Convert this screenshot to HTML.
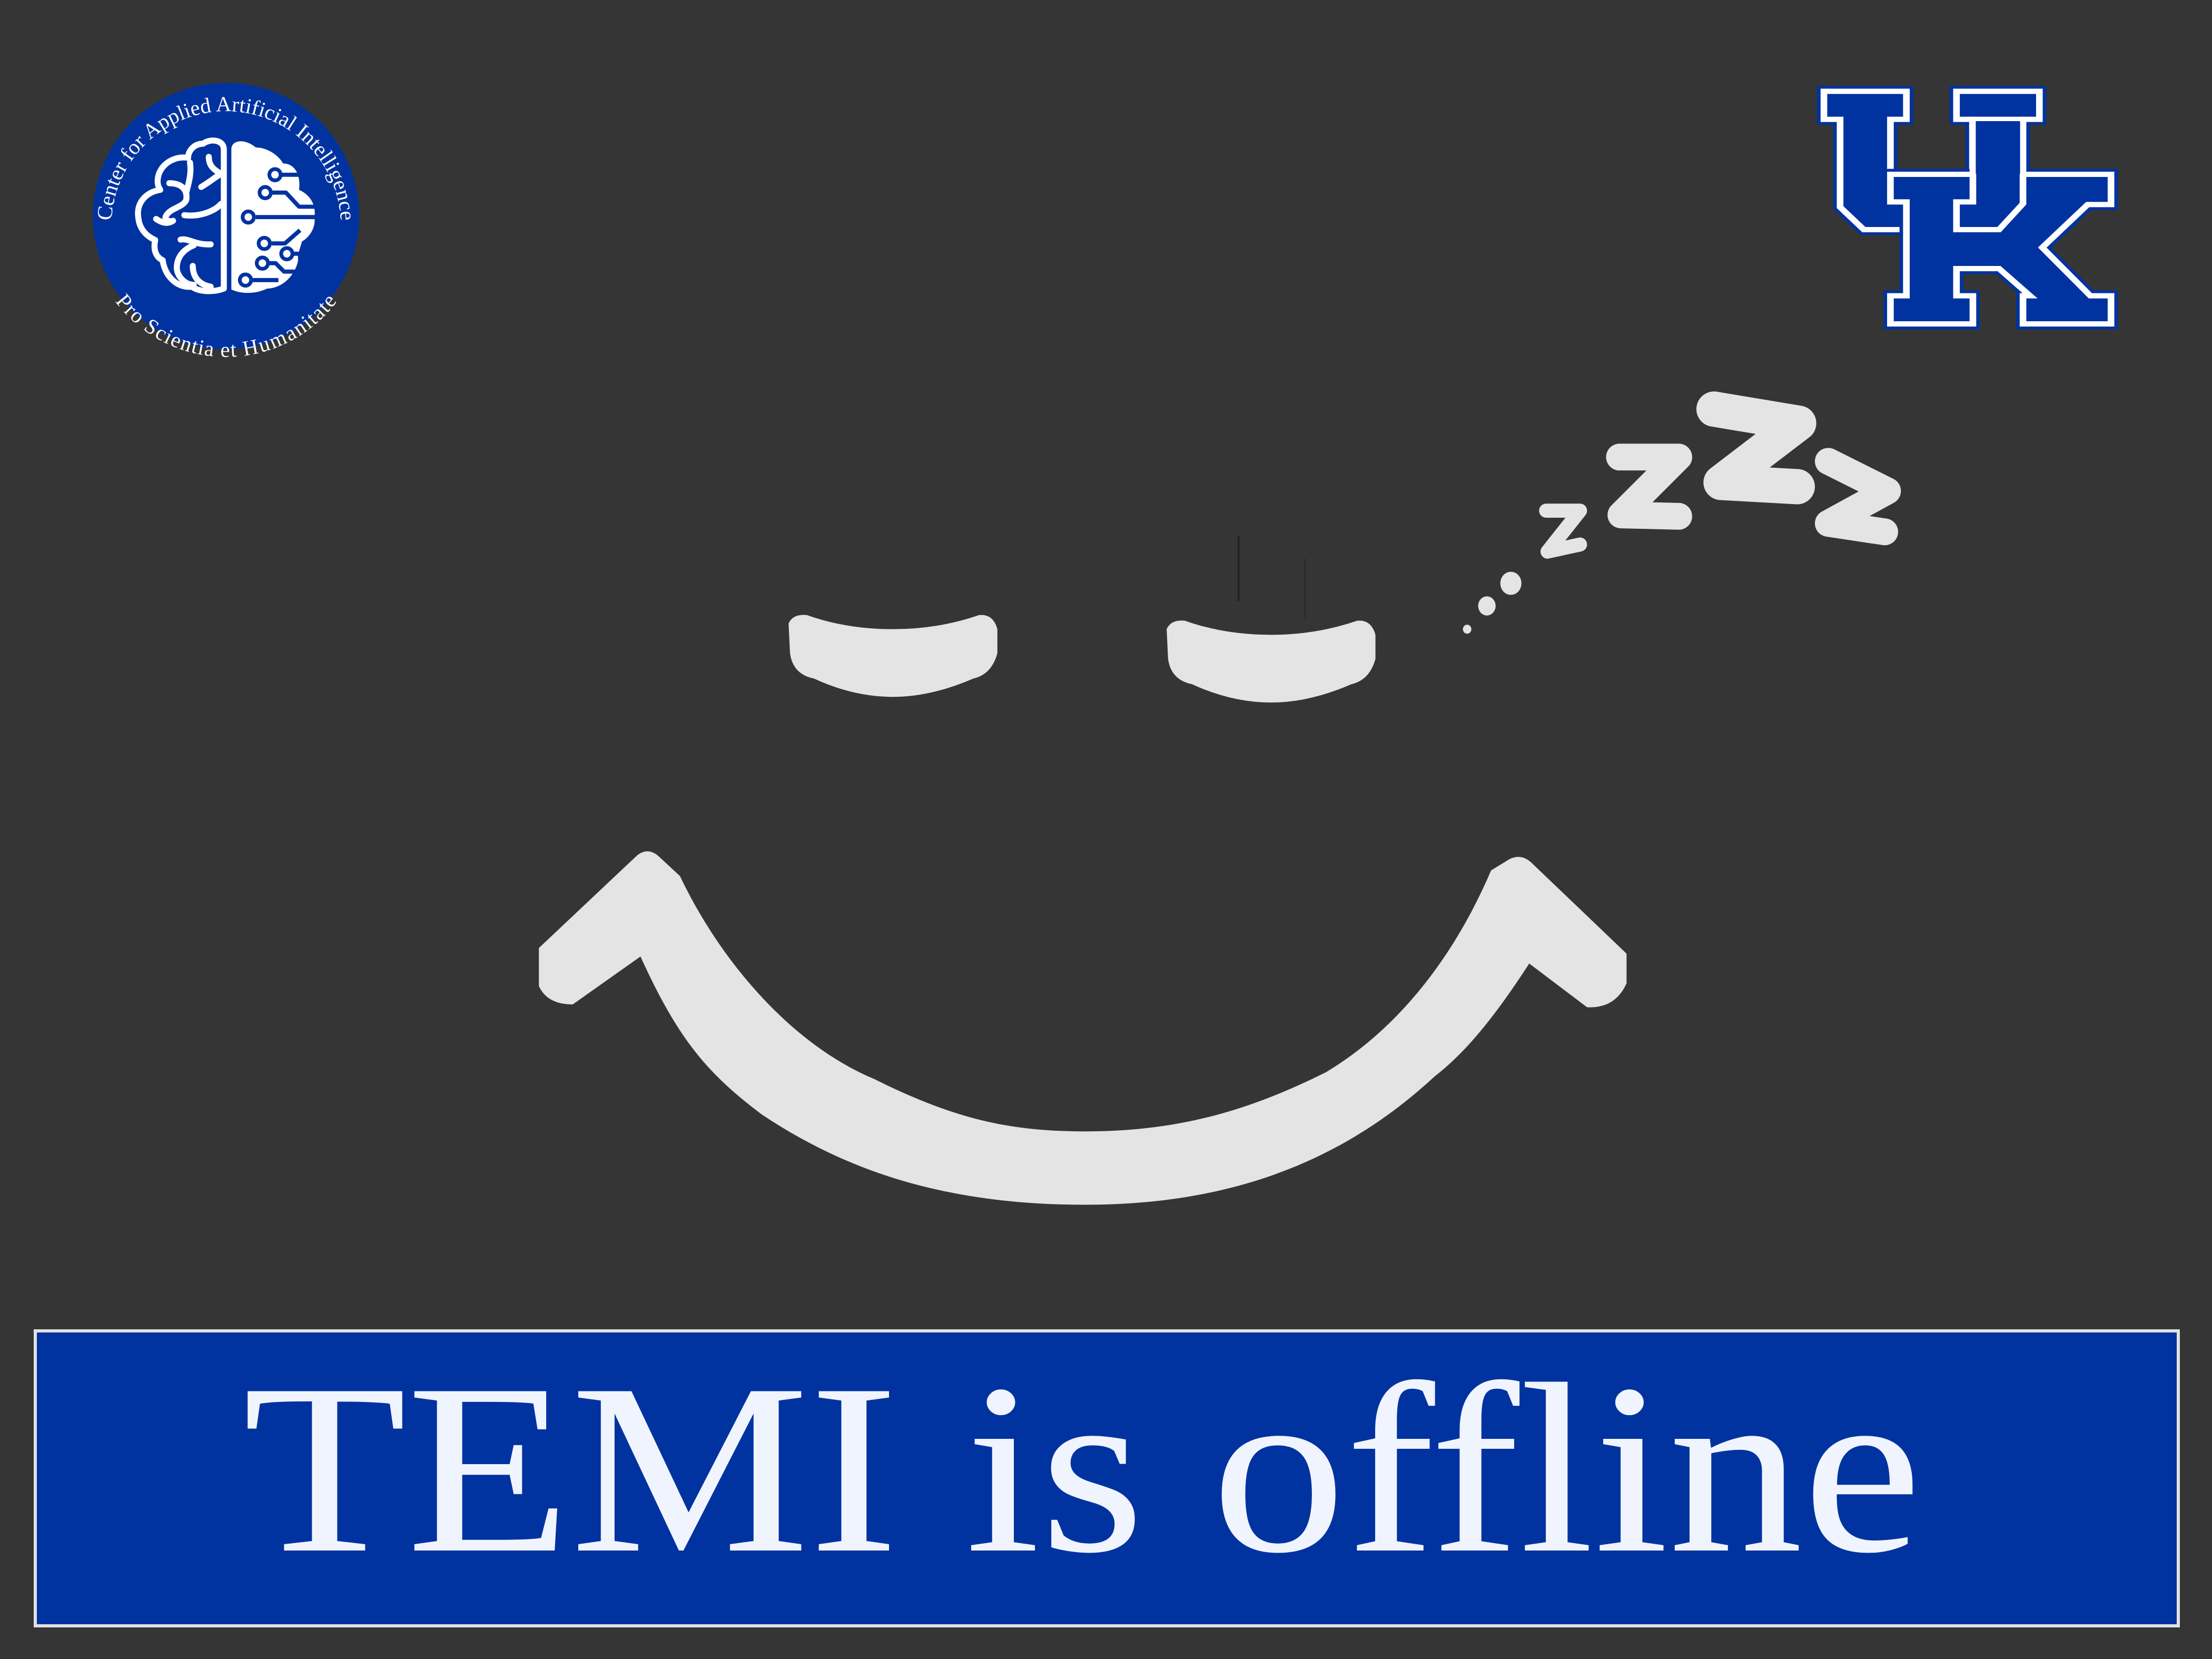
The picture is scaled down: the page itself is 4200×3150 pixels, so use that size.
<!DOCTYPE html>
<html><head><meta charset="utf-8"><style>
html,body{margin:0;padding:0;background:#353535;}
body{width:4200px;height:3150px;overflow:hidden;}
svg{display:block;}
</style></head><body>
<svg width="4200" height="3150" viewBox="0 0 4200 3150" xmlns="http://www.w3.org/2000/svg">
<rect width="4200" height="3150" fill="#353535"/>

<g transform="scale(2.67857)">
  <path fill="#e4e4e4" d="M559,442 Q562,435 572,436 Q600,446 633,446 Q665,446 694,436 Q704,435 707,446 L707,463 Q703,478 690,481 Q660,494 633,494 Q605,494 577,481 Q562,478 560,463 Z"/>
  <path fill="#e4e4e4" transform="translate(268,4)" d="M559,442 Q562,435 572,436 Q600,446 633,446 Q665,446 694,436 Q704,435 707,446 L707,463 Q703,478 690,481 Q660,494 633,494 Q605,494 577,481 Q562,478 560,463 Z"/>
  <line x1="878" y1="380" x2="878" y2="426" stroke="#1e1e1e" stroke-width="1.2"/>
  <line x1="925" y1="396" x2="925" y2="438" stroke="#2a2a2a" stroke-width="1"/>
  <path fill="#e4e4e4" d="M382,672 L452,606 Q460,600 468,608 L482,621 C510,680 560,740 620,765 C680,795 720,802 769,802 C830,802 880,790 940,760 C990,730 1030,680 1057,617 L1070,609 Q1078,605 1085,611 L1153,676 L1153,697 Q1145,715 1125,714 L1084,683 C1060,720 1040,745 1017,763 C950,825 870,854 769,854 C670,854 600,830 540,790 C500,760 480,735 454,678 L406,712 Q388,712 382,699 Z"/>
  <ellipse cx="1040" cy="446" rx="3" ry="3.2" fill="#e4e4e4"/>
  <ellipse cx="1054" cy="429.5" rx="6.2" ry="6.8" fill="#e4e4e4"/>
  <ellipse cx="1071" cy="413.5" rx="7.5" ry="8.2" fill="#e4e4e4"/>
  <g fill="none" stroke="#e4e4e4" stroke-linecap="round" stroke-linejoin="round">
    <path stroke-width="10" d="M1096,362 L1120,362 L1097,391 L1120,386"/>
    <path stroke-width="19" d="M1148,324 L1190,324 L1149,365 L1190,366"/>
    <path stroke-width="25" d="M1215,290 L1275,300 L1220,342 L1274,345"/>
    <path stroke-width="19" d="M1296,327 L1338,348 L1296,371 L1336,377"/>
  </g>
</g>

<svg x="150" y="130" width="560" height="560" viewBox="0 0 1568 1568">
  <circle cx="782" cy="785" r="708" fill="#0033a0"/>
  <defs>
    <path id="topArc" d="M 200,1020 A 610 610 0 1 1 1364,1020"/>
    <path id="botArc" d="M 130,860 A 655 655 0 0 0 1434,860"/>
  </defs>
  <text font-family="Liberation Serif, serif" font-size="114" fill="#ffffff"><textPath href="#topArc" startOffset="50%" text-anchor="middle">Center for Applied Artificial Intelligence</textPath></text>
  <text font-family="Liberation Serif, serif" font-size="114" fill="#ffffff" dominant-baseline="hanging"><textPath href="#botArc" startOffset="50%" text-anchor="middle">Pro Scientia et Humanitate</textPath></text>
  <g fill="none" stroke="#fff" stroke-width="32" stroke-linecap="round" stroke-linejoin="round">
    <path d="M770,1170 L770,430 C770,380 700,370 660,400 C610,400 580,440 580,475 C520,465 450,495 425,560 C412,600 418,625 432,645 C345,660 305,725 315,790 C320,850 355,890 405,912 C395,960 405,1000 445,1020 C455,1100 520,1170 600,1160 C640,1190 720,1190 770,1170"/>
    <path d="M690,470 C690,520 720,540 755,560 C720,580 700,600 650,630"/>
    <path d="M590,500 C600,560 580,620 570,660"/>
    <path d="M480,610 C540,610 580,640 570,700 C550,740 490,740 465,780 C450,800 470,820 480,810"/>
    <path d="M410,800 C440,820 470,830 500,810"/>
    <path d="M560,780 C640,790 720,760 755,720"/>
    <path d="M540,910 C580,900 620,940 700,935"/>
    <path d="M610,940 C560,960 520,1000 520,1060 C520,1100 560,1150 610,1150"/>
    <path d="M605,1050 C605,1110 640,1150 700,1160"/>
  </g>
  <path fill="#fff" d="M810,1175 L810,430 C810,380 880,370 940,420 C1000,420 1060,460 1085,505 C1150,505 1180,570 1170,645 C1235,675 1260,730 1252,790 C1260,850 1222,900 1185,920 C1175,960 1160,990 1165,1020 C1150,1100 1080,1170 1000,1170 C940,1200 860,1200 810,1175 Z"/>
  <g fill="none" stroke="#0033a0" stroke-width="22" stroke-linejoin="round">
    <path d="M1080,565 L1175,565"/>
    <path d="M1028,660 L1100,660 L1170,735 L1262,735"/>
    <path d="M940,790 L1262,790"/>
    <path d="M1025,930 L1095,930 L1175,860"/>
    <path d="M1143,985 L1180,985"/>
    <path d="M1013,1035 L1045,1035 L1090,1080 L1175,1080"/>
    <path d="M923,1125 L1060,1125"/>
  </g>
  <g fill="#fff" stroke="#0033a0" stroke-width="20">
    <circle cx="1042" cy="565" r="30"/>
    <circle cx="990" cy="660" r="30"/>
    <circle cx="900" cy="790" r="30"/>
    <circle cx="985" cy="930" r="30"/>
    <circle cx="1105" cy="985" r="30"/>
    <circle cx="975" cy="1035" r="30"/>
    <circle cx="885" cy="1125" r="30"/>
  </g>
</svg>

<svg x="3400" y="130" width="660" height="520" viewBox="0 0 1568 1560" preserveAspectRatio="none">
  <g stroke-linejoin="miter">
    <path d="M150,130 L522,130 L522,290 L450,290 L450,603 L820,603 L820,290 L748,290 L748,130 L1122,130 L1122,290 L1048,290 L1048,770 L940,918 L330,918 L223,790 L223,290 L150,290 Z" fill="#0033a0" stroke="#0033a0" stroke-width="62"/>
    <path d="M150,130 L522,130 L522,290 L450,290 L450,603 L820,603 L820,290 L748,290 L748,130 L1122,130 L1122,290 L1048,290 L1048,770 L940,918 L330,918 L223,790 L223,290 L150,290 Z" fill="#0033a0" stroke="#fff" stroke-width="30"/>
    <path d="M450,603 L1445,603 L1445,775 L1340,775 L1135,1020 L1352,1295 L1445,1295 L1445,1455 L1048,1455 L1048,1295 L1080,1295 L940,1140 L748,1140 L748,1295 L822,1295 L822,1455 L450,1455 L450,1295 L522,1295 L522,760 L450,760 Z" fill="#0033a0" stroke="#0033a0" stroke-width="62"/>
    <path d="M450,603 L1445,603 L1445,775 L1340,775 L1135,1020 L1352,1295 L1445,1295 L1445,1455 L1048,1455 L1048,1295 L1080,1295 L940,1140 L748,1140 L748,1295 L822,1295 L822,1455 L450,1455 L450,1295 L522,1295 L522,760 L450,760 Z" fill="#0033a0" stroke="#fff" stroke-width="30"/>
    <path d="M822,290 L1048,290 L1048,770 L940,918 L748,918 L748,760 L822,760 Z" fill="#0033a0" stroke="#fff" stroke-width="30"/>
    <path d="M835,300 L1035,300 L1035,600 L835,600 Z" fill="#0033a0"/>
  </g>
</svg>

<rect x="67" y="2527" width="4069" height="560" fill="#0033a0" stroke="#e2e2e2" stroke-width="6"/>
<text x="461" y="2944" font-family="Liberation Serif, serif" font-size="462" fill="#f0f4ff" textLength="3188" lengthAdjust="spacingAndGlyphs">TEMI is offline</text>
</svg>
</body></html>
